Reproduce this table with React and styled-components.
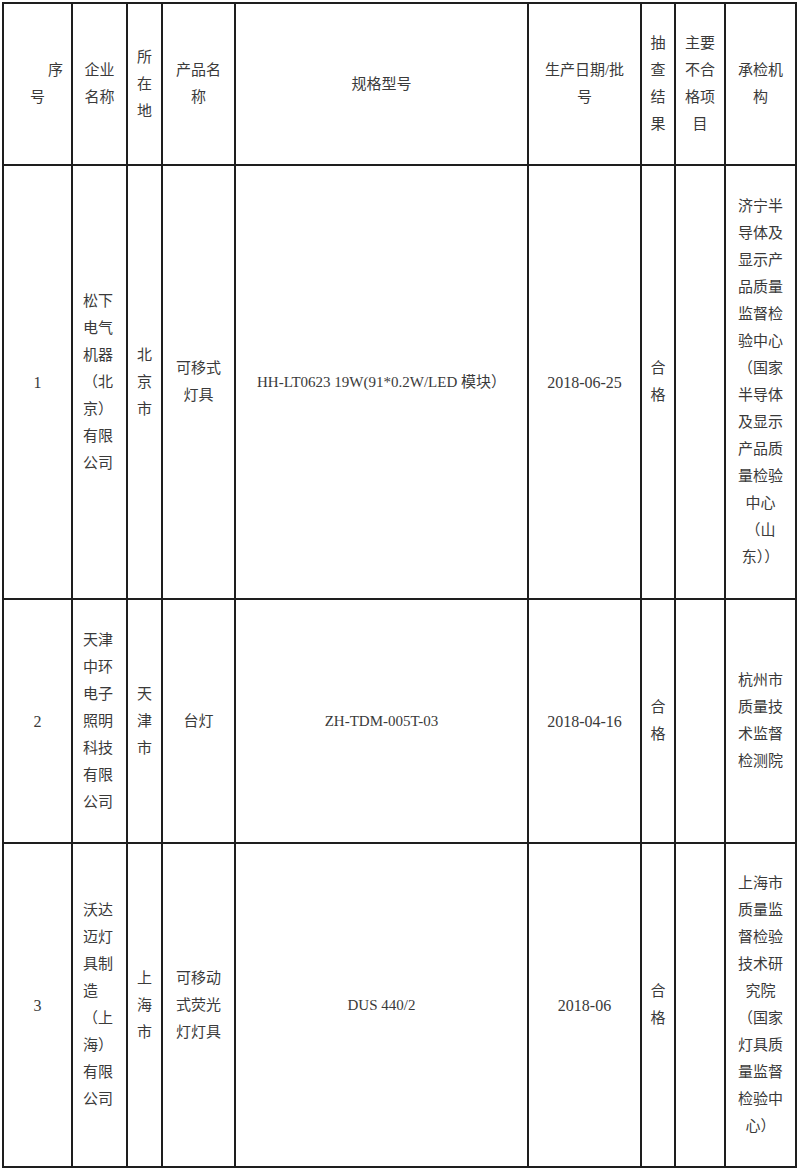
import React from 'react'
import styled, { createGlobalStyle } from 'styled-components'

const COLUMNS = [69, 55, 35, 73, 293, 113, 34, 50, 71]
const ROW_HEIGHTS = [162, 434, 244, 324]
const LINE = '#1e1e1e'

const GlobalStyle = createGlobalStyle`
  html, body {
    margin: 0;
    padding: 0;
    background: #fff;
  }
  body {
    padding: 2px;
    font-family: "Liberation Serif", "Noto Sans CJK SC", serif;
  }
`

const Table = styled.div`
  display: grid;
  grid-template-columns: ${COLUMNS.map(w => `${w}px`).join(' ')};
  grid-template-rows: ${ROW_HEIGHTS.map(h => `${h}px`).join(' ')};
  width: max-content;
  border-left: 2px solid ${LINE};
  border-top: 2px solid ${LINE};
`

const Cell = styled.div`
  box-sizing: border-box;
  display: flex;
  flex-direction: column;
  justify-content: center;
  align-items: ${p => (p.$left ? 'flex-start' : 'center')};
  padding-left: ${p => (p.$left ? '10px' : '0')};
  border-right: 2px solid ${LINE};
  border-bottom: 2px solid ${LINE};
  color: #3a3a3a;
  font-size: ${p => (p.$num ? '16px' : '15px')};
  overflow: hidden;
`

const Line = styled.span`
  display: block;
  line-height: 27px;
  white-space: pre;
  padding-left: ${p => p.$indent || 0}px;
`

const header = [
  { lines: [{ t: '序', indent: 36 }, { t: '号' }] },
  { lines: ['企业', '名称'] },
  { lines: ['所', '在', '地'] },
  { lines: ['产品名', '称'] },
  { lines: ['规格型号'] },
  { lines: ['生产日期/批', '号'] },
  { lines: ['抽', '查', '结', '果'] },
  { lines: ['主要', '不合', '格项', '目'] },
  { lines: ['承检机', '构'] }
]

const records = [
  [
    { num: true, lines: ['1'] },
    { left: true, lines: ['松下', '电气', '机器', '（北', '京）', '有限', '公司'] },
    { lines: ['北', '京', '市'] },
    { lines: ['可移式', '灯具'] },
    { lines: ['HH-LT0623 19W(91*0.2W/LED 模块）'] },
    { num: true, lines: ['2018-06-25'] },
    { lines: ['合', '格'] },
    { lines: [] },
    {
      lines: [
        '济宁半', '导体及', '显示产', '品质量', '监督检', '验中心', '（国家',
        '半导体', '及显示', '产品质', '量检验', '中心', '（山', '东））'
      ]
    }
  ],
  [
    { num: true, lines: ['2'] },
    { left: true, lines: ['天津', '中环', '电子', '照明', '科技', '有限', '公司'] },
    { lines: ['天', '津', '市'] },
    { lines: ['台灯'] },
    { lines: ['ZH-TDM-005T-03'] },
    { num: true, lines: ['2018-04-16'] },
    { lines: ['合', '格'] },
    { lines: [] },
    { lines: ['杭州市', '质量技', '术监督', '检测院'] }
  ],
  [
    { num: true, lines: ['3'] },
    { left: true, lines: ['沃达', '迈灯', '具制', '造', '（上', '海）', '有限', '公司'] },
    { lines: ['上', '海', '市'] },
    { lines: ['可移动', '式荧光', '灯灯具'] },
    { lines: ['DUS 440/2'] },
    { num: true, lines: ['2018-06'] },
    { lines: ['合', '格'] },
    { lines: [] },
    {
      lines: [
        '上海市', '质量监', '督检验', '技术研', '究院', '（国家', '灯具质',
        '量监督', '检验中', '心）'
      ]
    }
  ]
]

const renderCell = (cell, key) => (
  <Cell key={key} $left={cell.left} $num={cell.num}>
    {cell.lines.map((line, i) =>
      typeof line === 'string'
        ? <Line key={i}>{line}</Line>
        : <Line key={i} $indent={line.indent}>{line.t}</Line>
    )}
  </Cell>
)

const App = () => (
  <>
    <GlobalStyle />
    <Table>
      {header.map((cell, i) => renderCell(cell, `h${i}`))}
      {records.map((row, r) => row.map((cell, c) => renderCell(cell, `${r}-${c}`)))}
    </Table>
  </>
)

export default App
